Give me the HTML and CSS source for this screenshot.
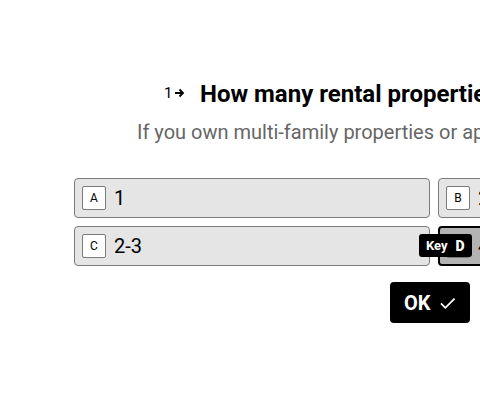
FILE: index.html
```html
<!DOCTYPE html>
<html>
<head>
<meta charset="utf-8">
<link rel="stylesheet" href="styles.css">
</head>
<body>
<main class="page">
  <div class="question">
    <span class="qnum">1<svg class="qarrow" width="11" height="10" viewBox="0 0 11 10"><path d="M1 5h8M5.5 1.5L9 5l-3.5 3.5" fill="none" stroke="#000" stroke-width="1.8"/></svg></span>
    <h1 class="qtitle">How many rental properties do you own?</h1>
  </div>
  <p class="subtitle">If you own multi-family properties or apartment buildings, count each unit.</p>
  <div class="options">
    <div class="option"><span class="key">A</span><span class="label">1</span></div>
    <div class="option"><span class="key">B</span><span class="label">2</span></div>
    <div class="option"><span class="key">C</span><span class="label">2-3</span></div>
    <div class="option option-active"><span class="tooltip">Key <b>D</b></span><span class="key">D</span><span class="label">4+</span></div>
  </div>
  <div class="actions">
    <button class="ok">OK<svg width="18" height="14" viewBox="0 0 18 14"><path d="M2 7.5l4.5 4.5L16 2.5" fill="none" stroke="#fff" stroke-width="1.8"/></svg></button>
  </div>
</main>
</body>
</html>
```
FILE: styles.css
```css
html, body {
  margin: 0;
  padding: 0;
  background: #fff;
  overflow: hidden;
  width: 480px;
  height: 402px;
}
body {
  font-family: Roboto, "Liberation Sans", sans-serif;
  color: #000;
}
.page {
  width: 900px;
  padding-top: 80px;
}
.question {
  display: flex;
  align-items: center;
  margin-left: 164px;
  height: 28px;
  white-space: nowrap;
}
.qnum {
  display: flex;
  align-items: center;
  font-size: 15px;
  width: 36px;
  gap: 2px;
  margin-top: -2px;
}
.qtitle {
  margin: 0;
  font-size: 24px;
  font-weight: 700;
  line-height: 28px;
}
.subtitle {
  margin: 10px 0 0 137px;
  font-size: 20px;
  line-height: 28px;
  color: #666;
  white-space: nowrap;
}
.options {
  display: grid;
  grid-template-columns: 356px 356px;
  gap: 8px;
  margin: 32px 0 0 74px;
}
.option {
  position: relative;
  display: flex;
  align-items: center;
  gap: 8px;
  height: 40px;
  box-sizing: border-box;
  padding: 0 7px;
  background: #e5e5e5;
  border: 1px solid #7a7a7a;
  border-radius: 4px;
  font-size: 20px;
}
.option-active {
  background: #b3b3b3;
  border: 2px solid #000;
  padding: 0 6px;
}
.key {
  display: flex;
  align-items: center;
  justify-content: center;
  width: 24px;
  height: 24px;
  box-sizing: border-box;
  background: #fff;
  border: 1px solid #7a7a7a;
  border-radius: 2px;
  font-size: 12px;
}
.tooltip {
  position: absolute;
  left: -21px;
  top: 6px;
  background: #000;
  color: #fff;
  font-size: 13px;
  font-weight: 700;
  padding: 0 7px;
  height: 23px;
  display: flex;
  align-items: center;
  gap: 8px;
  border-radius: 3px;
  white-space: nowrap;
  z-index: 2;
}
.tooltip b {
  font-size: 14px;
}
.actions {
  margin: 16px 0 0 390px;
}
.ok {
  display: flex;
  align-items: center;
  gap: 8px;
  height: 41px;
  width: 80px;
  box-sizing: border-box;
  padding: 0 14px;
  background: #000;
  color: #fff;
  border: 0;
  border-radius: 4px;
  font-family: Roboto, "Liberation Sans", sans-serif;
  font-size: 20px;
  font-weight: 700;
}
```
